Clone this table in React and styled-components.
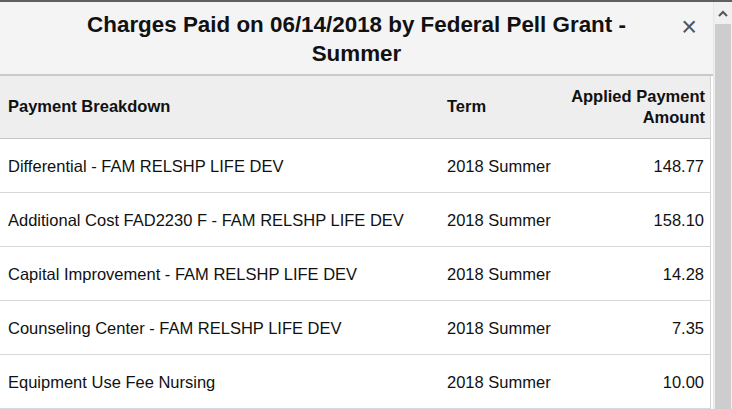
import React from "react";
import styled, { createGlobalStyle } from "styled-components";

const rows = [
  { name: "Differential - FAM RELSHP LIFE DEV", term: "2018 Summer", amount: "148.77" },
  { name: "Additional Cost FAD2230 F - FAM RELSHP LIFE DEV", term: "2018 Summer", amount: "158.10" },
  { name: "Capital Improvement - FAM RELSHP LIFE DEV", term: "2018 Summer", amount: "14.28" },
  { name: "Counseling Center - FAM RELSHP LIFE DEV", term: "2018 Summer", amount: "7.35" },
  { name: "Equipment Use Fee Nursing", term: "2018 Summer", amount: "10.00" },
];

const App = () => {
  return (
    <>
      <GlobalStyle />
      <Modal>
        <Content>
          <Header>
            <Title>
              Charges Paid on 06/14/2018 by Federal Pell Grant -
              <br />
              Summer
            </Title>
            <Close aria-label="Close">×</Close>
          </Header>
          <Table>
            <thead>
              <HeadRow>
                <Th>Payment Breakdown</Th>
                <Th>Term</Th>
                <Th $right>
                  Applied Payment
                  <br />
                  Amount
                </Th>
              </HeadRow>
            </thead>
            <tbody>
              {rows.map((row) => (
                <Row key={row.name}>
                  <Td>{row.name}</Td>
                  <Td>{row.term}</Td>
                  <Td $right>{row.amount}</Td>
                </Row>
              ))}
            </tbody>
          </Table>
        </Content>
        <Scrollbar>
          <Arrow>
            <svg width="10" height="7" viewBox="0 0 10 7">
              <path d="M1 6 L5 2 L9 6" fill="none" stroke="#555" strokeWidth="2" />
            </svg>
          </Arrow>
          <Thumb />
        </Scrollbar>
      </Modal>
    </>
  );
};

export default App;

const GlobalStyle = createGlobalStyle`
  html, body {
    margin: 0;
    padding: 0;
    background: #fff;
    font-family: "Liberation Sans", Arial, sans-serif;
    overflow: hidden;
  }
`;

const Modal = styled.div`
  display: flex;
  width: 732px;
  height: 409px;
  border-top: 2px solid #5f5f5f;
  box-sizing: border-box;
  overflow: hidden;
  background: #fff;
`;

const Content = styled.div`
  flex: 1;
  min-width: 0;
  display: flex;
  flex-direction: column;
`;

const Header = styled.div`
  position: relative;
  flex: none;
  background: #f4f4f4;
  height: 74px;
  box-sizing: border-box;
  padding-top: 8px;
  border-bottom: 2px solid #c9c9c9;
  text-align: center;
`;

const Title = styled.h1`
  margin: 0;
  font-size: 22.4px;
  line-height: 29px;
  font-weight: bold;
  color: #111;
`;

const Close = styled.span`
  position: absolute;
  right: 16px;
  top: 10px;
  font-size: 27px;
  line-height: 30px;
  color: #555;
  cursor: pointer;
`;

const Table = styled.table`
  width: 711px;
  border-collapse: collapse;
  border-right: 1px solid #d4d4d4;
`;

const HeadRow = styled.tr`
  background: #eeeeee;
  height: 62px;
  border-bottom: 1px solid #c4c4c4;
`;

const Th = styled.th`
  padding: 0 5px 0 8px;
  font-size: 16.5px;
  line-height: 21px;
  font-weight: bold;
  color: #111;
  text-align: ${(p) => (p.$right ? "right" : "left")};
  &:first-child {
    width: 426px;
  }
`;

const Row = styled.tr`
  height: 54px;
  border-bottom: 1px solid #d8d8d8;
`;

const Td = styled.td`
  padding: 2px 6px 0 8px;
  font-size: 16.5px;
  color: #111;
  text-align: ${(p) => (p.$right ? "right" : "left")};
`;

const Scrollbar = styled.div`
  width: 18px;
  display: flex;
  flex-direction: column;
  background: #f0f0f0;
  border-left: 1px solid #e6e6e6;
`;

const Arrow = styled.div`
  height: 22px;
  display: flex;
  align-items: center;
  justify-content: center;
  background: #f0f0f0;
`;

const Thumb = styled.div`
  flex: 1;
  background: #cdcdcd;
  margin: 0 1px;
`;
